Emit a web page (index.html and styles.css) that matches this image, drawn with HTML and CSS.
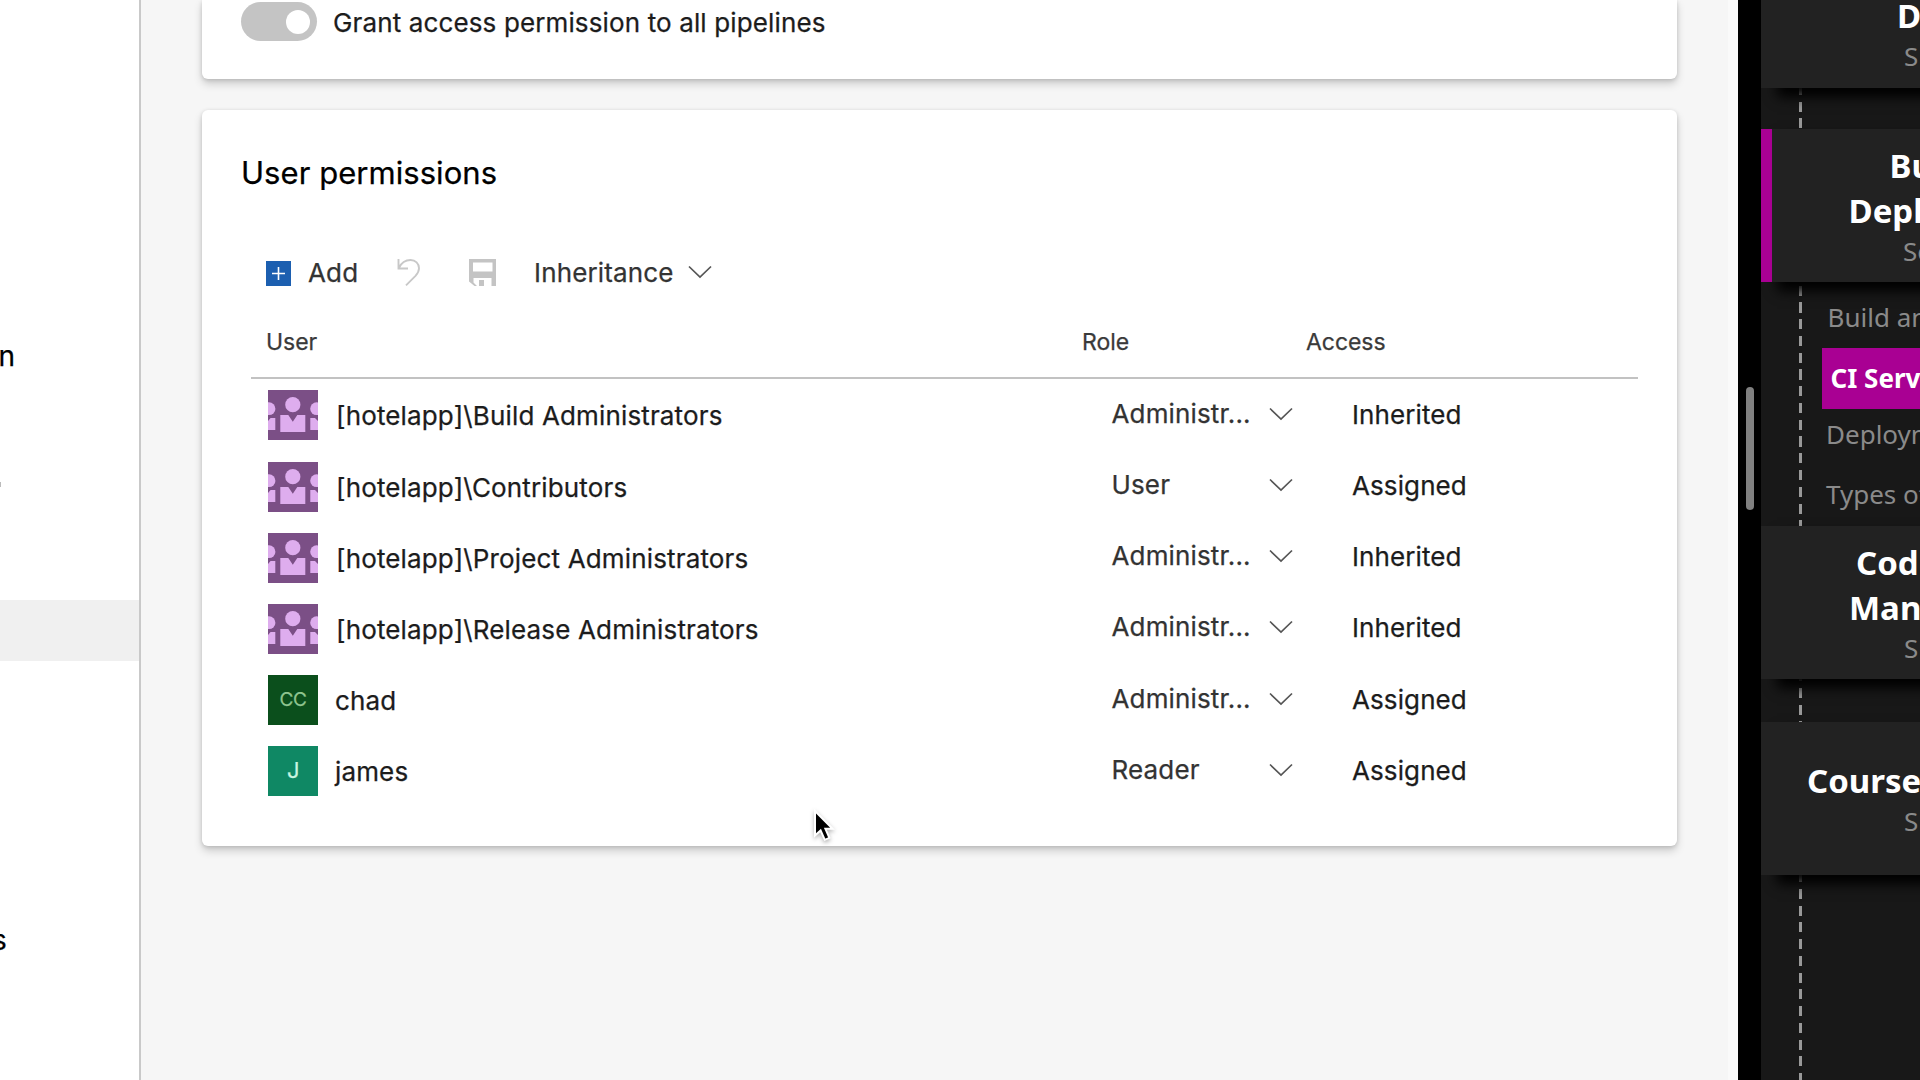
FILE: index.html
```html
<!DOCTYPE html>
<html lang="en">
<head>
<meta charset="utf-8">
<title>User permissions</title>
<link rel="stylesheet" href="styles.css">
</head>
<body>
<svg class="defs" aria-hidden="true">
  <symbol id="chevron" viewBox="0 0 24 14"><path d="M1 1.5 12 12 23 1.5" fill="none" stroke="currentColor" stroke-width="1.7"/></symbol>
  <symbol id="group" viewBox="0 0 50 50">
    <rect width="50" height="50" fill="#7b4f86"/>
    <g fill="#deadee">
      <circle cx="24.8" cy="14.7" r="7.6"/>
      <path d="M12.300 25h8L24.800 31.800 29.300 25h8v17H12.300z"/>
      <circle cx="1" cy="18.700" r="6.400"/><circle cx="48.600" cy="18.700" r="6.400"/>
      <path d="M0 31 2.600 28H7.300V40H0zM50 31 47 28H42.300V40H50z"/>
    </g>
  </symbol>
</svg>
<div class="app">
  <nav class="sidebar">
    <div class="side-item side-n">n</div>
    <div class="side-mark"></div>
    <div class="side-item side-active"></div>
    <div class="side-item side-s">s</div>
  </nav>

  <main class="main">
    <section class="card card-access">
      <span class="toggle"><span class="knob"></span></span>
      <span class="access-label">Grant access permission to all pipelines</span>
    </section>

    <section class="card card-users">
      <h2 class="title">User permissions</h2>
      <div class="toolbar">
        <svg class="i-add" viewBox="0 0 25 25"><rect width="25" height="25" fill="#1c5fb0"/><path d="M12.5 6v13M6 12.5h13" stroke="#fff" stroke-width="1.6"/></svg>
        <span class="t-add">Add</span>
        <svg class="i-undo" viewBox="0 0 24 28"><path d="M1.5 1v9.5H11M1.8 10C4.500 4.500 8.500 2 13.500 2 18.500 2 22 5.500 22 10.200c0 3-1.300 5.200-3.500 7.600L9 27.300" fill="none" stroke="#c8c8c8" stroke-width="1.9"/></svg>
        <svg class="i-save" viewBox="0 0 27 27"><path fill="#c4c4c4" fill-rule="evenodd" d="M0 0h27v27h-4.500v-8H4.500v4.500L8 27H5.500L0 22.500zM4 3.500v9h19.500v-9z"/><path fill="#c4c4c4" d="M10 21h5v6h-5z"/></svg>
        <span class="t-inh">Inheritance</span>
        <svg class="chev"><use href="#chevron"/></svg>
      </div>

      <div class="table">
        <div class="row head"><span>User</span><span>Role</span><span>Access</span></div>
        <div class="row">
          <div class="user"><svg class="avatar"><use href="#group"/></svg><span class="name">[hotelapp]\Build Administrators</span></div>
          <div class="role"><span>Administr...</span><svg class="chev"><use href="#chevron"/></svg></div><div class="access">Inherited</div>
        </div>
        <div class="row">
          <div class="user"><svg class="avatar"><use href="#group"/></svg><span class="name">[hotelapp]\Contributors</span></div>
          <div class="role"><span>User</span><svg class="chev"><use href="#chevron"/></svg></div><div class="access">Assigned</div>
        </div>
        <div class="row">
          <div class="user"><svg class="avatar"><use href="#group"/></svg><span class="name">[hotelapp]\Project Administrators</span></div>
          <div class="role"><span>Administr...</span><svg class="chev"><use href="#chevron"/></svg></div><div class="access">Inherited</div>
        </div>
        <div class="row">
          <div class="user"><svg class="avatar"><use href="#group"/></svg><span class="name">[hotelapp]\Release Administrators</span></div>
          <div class="role"><span>Administr...</span><svg class="chev"><use href="#chevron"/></svg></div><div class="access">Inherited</div>
        </div>
        <div class="row">
          <div class="user"><span class="avatar initials cc">CC</span><span class="name plain">chad</span></div>
          <div class="role"><span>Administr...</span><svg class="chev"><use href="#chevron"/></svg></div><div class="access">Assigned</div>
        </div>
        <div class="row">
          <div class="user"><span class="avatar initials j">J</span><span class="name plain">james</span></div>
          <div class="role"><span>Reader</span><svg class="chev"><use href="#chevron"/></svg></div><div class="access">Assigned</div>
        </div>
      </div>
    </section>
  </main>

  <div class="gutter"><span class="thumb"></span></div>

  <aside class="course">
    <div class="section section-first"><b class="x-d">D</b><small class="x-s">S</small></div>
    <div class="gap"></div>
    <div class="section section-current"><b class="x-bu">Bu</b><b class="x-dep">Depl</b><small class="x-se">Se</small></div>
    <div class="lessons">
      <div class="lesson l1">Build an</div>
      <div class="lesson l2">CI Serv</div>
      <div class="lesson l3">Deploym</div>
      <div class="lesson l4">Types of</div>
    </div>
    <div class="section"><b class="x-cod">Cod</b><b class="x-dep">Man</b><small class="x-s">S</small></div>
    <div class="gap gap-last"></div>
    <div class="section"><b class="x-course">Course</b><small class="x-s">S</small></div>
  </aside>
</div>
<svg class="cursor" viewBox="0 0 24 34"><path d="M2 2v24.500l5.600-5 4.200 9.300 4.600-2-4-9h7.200z" fill="#000" stroke="#fff" stroke-width="2"/></svg>
</body>
</html>
```
FILE: styles.css
```css
* { box-sizing: border-box; }
body { margin: 0; overflow: hidden; font: 26px/40px Inter, "Liberation Sans", sans-serif; letter-spacing: .15px; color: #1c1c1c; }
.defs { display: none; }
.app { display: flex; width: 1920px; height: 1080px; background: #f6f6f6; }

.sidebar { width: 141px; flex: none; padding-top: 326px; background: #fff; border-right: 2px solid #c9c9c9; overflow: hidden; }
.side-item { height: 61px; font-size: 28px; line-height: 61px; color: #000; -webkit-text-stroke: .25px; }
.side-n { text-indent: -1.500px; }
.side-s { margin-top: 249px; text-indent: -8px; }
.side-mark { width: 1px; height: 5px; margin: 95px 0 113px; background: #bbb; }
.side-active { background: #f0f0f0; }

.main { width: 1597px; flex: none; padding-left: 61px; border-right: 10px solid #fafafa; -webkit-text-stroke: .25px; }
.card { width: 1475px; background: #fff; box-shadow: 0 5px 9px rgba(0,0,0,.17), 0 1px 4px rgba(0,0,0,.14); }
.card-access { display: flex; height: 79px; padding-left: 39px; border-radius: 0 0 6px 6px; }
.toggle { display: flex; align-items: center; justify-content: flex-end; width: 76px; height: 39px; margin: 2px 16px 0 0; padding-right: 7px; border-radius: 20px; background: #c4c4c4; }
.knob { width: 24px; height: 24px; border-radius: 50%; background: #fff; }
.access-label { margin-top: 3px; letter-spacing: .130px; }
.card-users { height: 736px; margin-top: 31px; padding: 43px 39px 0 49px; border-radius: 6px; }
.title { margin: 0 0 60px -10px; font-size: 31px; font-weight: 400; line-height: 40px; letter-spacing: .050px; color: #000; }
.toolbar { display: flex; height: 40px; padding-left: 15px; color: #333; }
.toolbar svg { flex: none; }
.i-add { width: 25px; height: 25px; margin: 8px 17px 0 0; }
.t-add { width: 89px; }
.i-undo { width: 24px; height: 28px; margin-top: 5px; }
.i-save { width: 27px; height: 27px; margin: 6px 38px 0 48px; }
.chev { width: 24px; height: 14px; flex: none; color: #555; }
.t-inh { width: 154px; }
.toolbar .chev { margin-top: 12px; }

.table { margin-top: 34px; }
.row { display: grid; grid-template-columns: 846px 241px 1fr; align-items: center; height: 71.200px; }
.head { grid-template-columns: 816px 224px 1fr; align-items: start; height: 52px; margin-bottom: .800px; padding-left: 15px; border-bottom: 2px solid #c2c2c2; font-size: 23px; line-height: 30px; letter-spacing: -.050px; color: #3a3a3a; }
.user { display: flex; align-items: center; padding-left: 17px; }
.avatar { width: 50px; height: 50px; margin-right: 18px; flex: none; }
.name { padding-top: 2px; }
.plain { margin-left: -1px; }
.initials { font-size: 19px; line-height: 49px; text-align: center; letter-spacing: -.500px; }
.cc { background: #0b4f1c; color: #8fc48f; }
.j { background: #0f8864; color: #c9f5e0; font-size: 22px; }
.role { display: flex; align-items: center; justify-content: space-between; padding: 0 34px 3px 14.500px; width: 230px; color: #333; }
.access { padding-left: 14px; padding-bottom: 1px; letter-spacing: .100px; }

.gutter { width: 23px; flex: none; padding: 387px 7px 0 8px; background: #000; }
.thumb { display: block; width: 8px; height: 123px; border-radius: 4px; background: #808080; }

.course { width: 159px; flex: none; overflow: hidden; font-family: "Noto Sans", sans-serif; letter-spacing: 0; white-space: nowrap; color: #8a8a8a;
  background: repeating-linear-gradient(180deg, transparent 0 1px, #999 1px 11px, transparent 11px 16.750px) 38px 0 / 3px 100% no-repeat, #181818; }
.section { display: flex; flex-direction: column; justify-content: center; height: 153px; background: #222; box-shadow: 16px 9px 12px #000; }
.section-first { height: 88px; justify-content: flex-end; padding-bottom: 14px; }
.section-current { border-left: 11px solid #a90093; padding-top: 1px; }
.section b { font-size: 33px; line-height: 45px; color: #fff; }
.section small { font-size: 26px; line-height: 36px; }
.gap { height: 41px; }
.gap-last { height: 43px; }
.x-d { padding-left: 136px; }
.x-s { padding-left: 143px; }
.x-bu { padding-left: 117.500px; }
.x-dep { padding-left: 88px; }
.section-current .x-dep { padding-left: 76.500px; }
.x-se { padding-left: 131px; }
.x-cod { padding-left: 95px; }
.x-course { padding-left: 46px; }
.lessons { height: 244px; padding-top: 3px; }
.lesson { height: 63px; line-height: 64px; padding-left: 66.500px; }
.l2 { height: 61px; line-height: 61px; margin-left: 61px; padding-left: 8.500px; background: #a90093; color: #fff; font-weight: 700; }
.l3 { height: 50px; line-height: 50px; padding-left: 65px; }
.l4 { height: 67px; line-height: 70px; padding-left: 65px; }

.cursor { position: absolute; left: 813px; top: 809px; width: 24px; height: 34px; filter: drop-shadow(0 2px 2px rgba(0,0,0,.3)); }
```
